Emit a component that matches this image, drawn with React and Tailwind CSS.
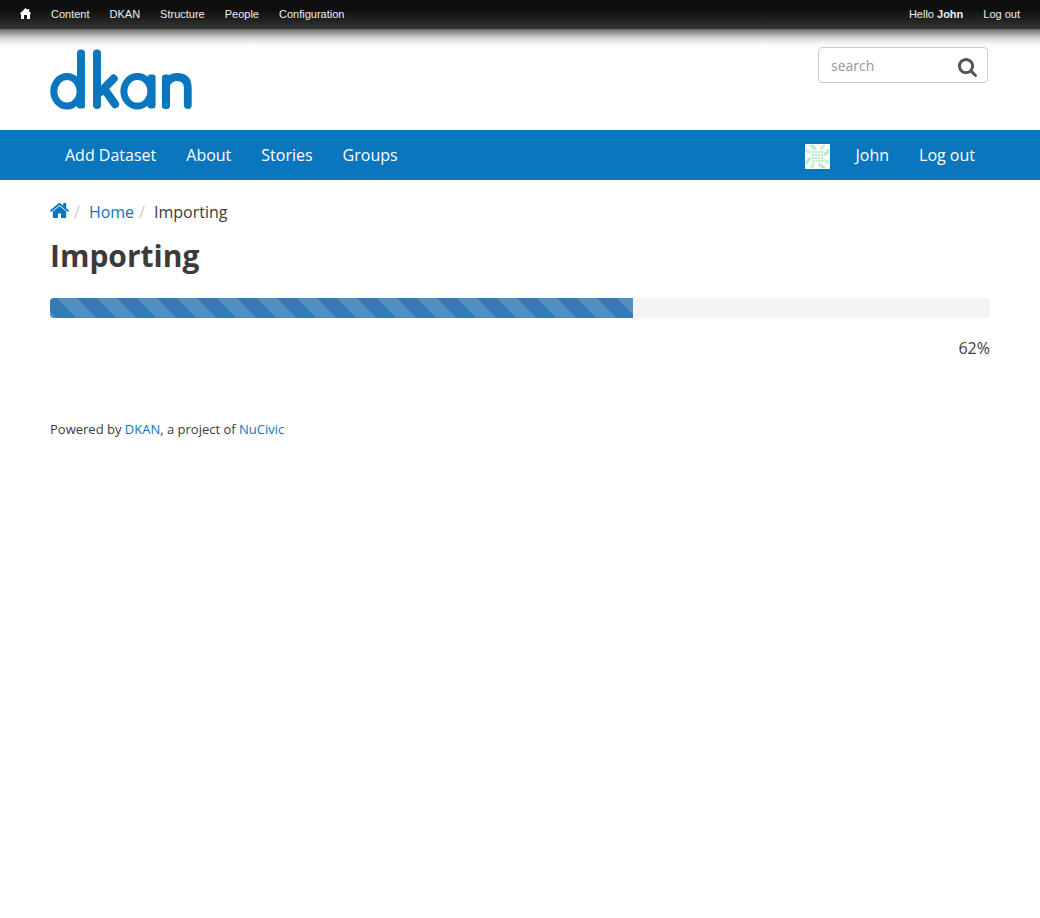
const adminLinks = ['Content', 'DKAN', 'Structure', 'People', 'Configuration'];
const mainLinks = ['Add Dataset', 'About', 'Stories', 'Groups'];
const progress = 62;

function AdminHomeIcon() {
  return (
    <svg viewBox="0 0 11 11" className="size-[11px]" fill="#fff" aria-hidden="true">
      <path d="M5.5 0 L7.5 2 V1 H9.2 V3.6 L11 5.4 V6 H10 V11 H7 V7 H4 V11 H1 V6 H0 V5.4 Z" />
    </svg>
  );
}

function Logo() {
  return (
    <svg viewBox="0 0 142 61" className="h-[61px] w-[142px]" role="img" aria-label="dkan">
      <g fill="#0a76bd">
        <rect x="27" y="0.5" width="8" height="30" rx="4" />
        <rect x="27" y="15" width="8" height="44.5" rx="2.5" />
        <rect x="43" y="0.5" width="8" height="59.5" rx="4" />
        <rect x="97.6" y="25.5" width="8" height="34" rx="3" />
        <rect x="112" y="25.5" width="8" height="34.5" rx="3" />
      </g>
      <g fill="none" stroke="#0a76bd">
        <ellipse cx="17" cy="42.3" rx="13.2" ry="14.8" strokeWidth="7" />
        <ellipse cx="87.4" cy="42.3" rx="13.5" ry="14.8" strokeWidth="7" />
        <path d="M50 43.5 L63.6 29.6 M55 41 L65 55.2" strokeWidth="8.2" strokeLinecap="round" />
        <path d="M117 34 Q120 28 127 28 Q137.8 28 137.8 39 V56" strokeWidth="7.8" strokeLinecap="round" />
      </g>
    </svg>
  );
}

function SearchIcon() {
  return (
    <svg viewBox="64 128 1664 1664" className="size-[19px]" fill="#555" aria-hidden="true">
      <path d="M1216 832q0-185-131.5-316.5t-316.5-131.5-316.5 131.5-131.5 316.5 131.5 316.5 316.5 131.5 316.5-131.5 131.5-316.5zm512 832q0 52-38 90t-90 38q-54 0-90-38l-343-342q-179 124-399 124-143 0-273.5-55.5t-225-150-150-225-55.5-273.5 55.5-273.5 150-225 225-150 273.5-55.5 273.5 55.5 225 150 150 225 55.5 273.5q0 220-124 399l343 343q37 37 37 90z" />
    </svg>
  );
}

function HomeIcon() {
  return (
    <svg viewBox="96 248 1600 1290" className="h-[15px] w-[19px]" fill="currentColor" aria-hidden="true">
      <path d="M1472 992v480q0 26-19 45t-45 19h-384v-384h-256v384h-384q-26 0-45-19t-19-45v-480q0-1 .5-3t.5-3l575-474 575 474q1 2 1 6zm223-69l-62 74q-8 9-21 11h-3q-13 0-21-7l-692-577-692 577q-12 8-24 7-13-2-21-11l-62-74q-8-10-7-23.5t11-21.5l719-599q32-26 76-26t76 26l244 204v-195q0-14 9-23t23-9h192q14 0 23 9t9 23v408l219 182q10 8 11 21.5t-7 23.5z" />
    </svg>
  );
}

function Avatar() {
  return (
    <svg viewBox="0 0 25 25" className="size-[25px]" role="img" aria-label="John's picture">
      <rect width="25" height="25" fill="#fff" />
      {[0, 90, 180, 270].map((turn) => (
        <g key={turn} transform={`rotate(${turn} 12.5 12.5)`} fill="#b9e8c2">
          <path d="M0 0 H2 L0 2 Z" opacity="0.4" />
          <path d="M4 1.5 L8 0.5 L12 4.5 L10.5 6.5 Z" />
          <path d="M0.5 8 L1.5 4 L7 8.5 L5 10 Z" opacity="0.7" />
          <path d="M3.5 3.5 L4.5 3 L7.5 6.5 L6.5 7.5 Z" opacity="0.35" />
        </g>
      ))}
      <g fill="#b9e8c2">
        {[7, 10, 13, 16].map((x) =>
          [7, 10, 13, 16].map((y) => <rect key={`${x}-${y}`} x={x} y={y} width="2" height="2" />)
        )}
      </g>
    </svg>
  );
}

export default function App() {
  return (
    <div className="bg-white font-['Open_Sans',sans-serif] text-base text-[#3b3b3b]">
      <nav
        aria-label="Administration"
        className="flex h-[29px] items-center justify-between bg-linear-to-b from-[#0f0f0f] from-35% to-[#353535] px-5 pb-0.5 font-['Liberation_Sans',Arial,sans-serif] text-[11px] leading-4 text-[#eee]"
      >
        <div className="flex items-center gap-5">
          <a href="#home" aria-label="Home"><AdminHomeIcon /></a>
          {adminLinks.map((label) => (
            <a key={label} href="#admin">{label}</a>
          ))}
        </div>
        <div className="flex items-center gap-5">
          <a href="#account">Hello <strong>John</strong></a>
          <a href="#logout">Log out</a>
        </div>
      </nav>

      <header className="bg-[linear-gradient(to_bottom,#666_0px,#999_4px,#ccc_8px,#e8e8e8_12px,#fafafa_16px,#fff_20px)]">
        <div className="mx-auto flex w-full max-w-[970px] items-start justify-between px-[15px] pt-[18px] pb-5">
          <a href="#home" className="mt-0.5"><Logo /></a>
          <form
            role="search"
            className="mr-0.5 flex h-9 w-[170px] items-center rounded border border-[#ccc] bg-white pr-2.5 pl-3"
          >
            <input
              type="search"
              aria-label="Search"
              placeholder="search"
              className="min-w-0 flex-1 bg-transparent pt-0.5 text-sm outline-none placeholder:text-[#999]"
            />
            <button type="button" aria-label="Submit search" className="mt-1"><SearchIcon /></button>
          </form>
        </div>
      </header>

      <nav aria-label="Main" className="bg-[#0a76bd] text-white">
        <div className="mx-auto flex h-[50px] w-full max-w-[970px] items-center justify-between px-[30px]">
          <div className="flex gap-[30px]">
            {mainLinks.map((label) => (
              <a key={label} href="#section">{label}</a>
            ))}
          </div>
          <div className="flex items-center">
            <a href="#profile" className="mt-[3px] mr-[25px]"><Avatar /></a>
            <a href="#profile" className="mr-[30px]">John</a>
            <a href="#logout">Log out</a>
          </div>
        </div>
      </nav>

      <main className="mx-auto w-full max-w-[970px] px-[15px] pt-5">
        <ol className="flex items-center leading-6">
          <li className="flex items-center">
            <a href="#home" aria-label="Front page" className="pb-[3px] text-[#0a76bd]"><HomeIcon /></a>
            <span className="px-[5px] text-[#ccc]" aria-hidden="true">/</span>
          </li>
          <li className="ml-1">
            <a href="#home" className="text-[#0a76bd]">Home</a>
            <span className="px-[5px] text-[#ccc]" aria-hidden="true">/</span>
          </li>
          <li className="ml-1">Importing</li>
        </ol>
        <h1 className="mt-3 text-[30px] leading-10 font-bold">Importing</h1>

        <div
          role="progressbar"
          aria-label="Importing"
          aria-valuenow={progress}
          aria-valuemin={0}
          aria-valuemax={100}
          className="mt-[22px] h-5 overflow-hidden rounded bg-[#f4f4f4]"
        >
          <div
            className="h-full bg-[#337ab7] bg-[linear-gradient(45deg,rgba(255,255,255,.15)_25%,transparent_25%,transparent_50%,rgba(255,255,255,.15)_50%,rgba(255,255,255,.15)_75%,transparent_75%,transparent)] bg-size-[40px_40px] bg-position-[7px_0px]"
            style={{ width: `${progress}%` }}
          />
        </div>
        <p className="mt-[18px] text-right leading-6">{progress}%</p>
      </main>

      <footer className="mx-auto w-full max-w-[970px] px-[15px] pt-[59px] pb-10 text-[13px] leading-5">
        Powered by <a href="#dkan" className="text-[#0a76bd]">DKAN</a>, a project of{' '}
        <a href="#nucivic" className="text-[#0a76bd]">NuCivic</a>
      </footer>
    </div>
  );
}
